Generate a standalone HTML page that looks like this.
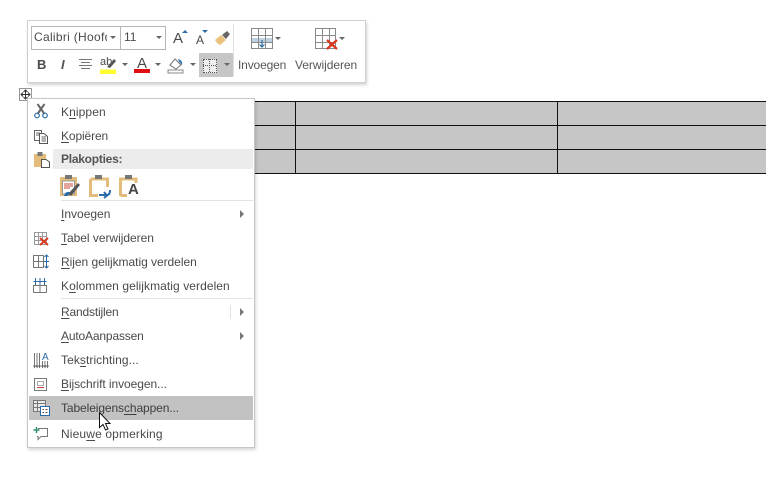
<!DOCTYPE html>
<html><head><meta charset="utf-8">
<style>
html,body{margin:0;padding:0;background:#fff;width:766px;height:482px;overflow:hidden}
body{position:relative;font-family:"Liberation Sans",sans-serif;color:#444}
.a{position:absolute}
.t{position:absolute;font-size:12px;line-height:16px;white-space:nowrap;color:#4a4a4a;letter-spacing:0}
svg{position:absolute;overflow:visible}
u{text-underline-offset:2px;text-decoration-thickness:1px}
.arr{position:absolute;width:0;height:0;border-left:4px solid #777;border-top:4px solid transparent;border-bottom:4px solid transparent}
.dn{position:absolute;width:0;height:0;border-top:3px solid #666;border-left:3px solid transparent;border-right:3px solid transparent}
</style></head><body>

<!-- table -->
<div class="a" style="left:250px;top:101px;width:516px;height:73px;background:#c6c6c6"></div>
<div class="a" style="left:250px;top:101px;width:516px;height:1px;background:#111"></div>
<div class="a" style="left:250px;top:125px;width:516px;height:1px;background:#111"></div>
<div class="a" style="left:250px;top:149px;width:516px;height:1px;background:#111"></div>
<div class="a" style="left:250px;top:173px;width:516px;height:1px;background:#111"></div>
<div class="a" style="left:295px;top:101px;width:1px;height:73px;background:#111"></div>
<div class="a" style="left:557px;top:101px;width:1px;height:73px;background:#111"></div>

<!-- mini toolbar -->
<div class="a" style="left:27px;top:20px;width:337px;height:61px;background:#fff;border:1px solid #d0d0d0;box-shadow:1px 2px 3px rgba(0,0,0,.18)"></div>
<div class="a" style="left:31px;top:26px;width:88px;height:22px;border:1px solid #b5b5b5"></div>
<div class="a" style="left:120px;top:26px;width:45px;height:22px;border:1px solid #b5b5b5;border-left:0"></div>
<div class="t" style="left:34px;top:29px;width:73px;overflow:hidden;letter-spacing:.3px">Calibri (Hoofdtekst)</div>
<div class="dn" style="left:110px;top:36px"></div>
<div class="t" style="left:124px;top:29px">11</div>
<div class="dn" style="left:156px;top:36px"></div>
<div class="t" style="left:173px;top:31px;font-size:15px">A</div>
<div class="a" style="left:182px;top:30px;border-bottom:3px solid #2b6ca8;border-left:3px solid transparent;border-right:3px solid transparent"></div>
<div class="t" style="left:196px;top:32px;font-size:12px">A</div>
<div class="a" style="left:202px;top:30px;border-top:3px solid #2b6ca8;border-left:3px solid transparent;border-right:3px solid transparent"></div>
<svg style="left:214px;top:30px" width="18" height="16"><path d="M1 10L7 5L12 10L6 15L3 13Z" fill="#eac27c"/><path d="M8 5L13 1L16 4L12 9Z" fill="#666"/></svg>
<div class="a" style="left:233px;top:24px;width:1px;height:52px;background:#e2e2e2"></div>

<div class="t" style="left:37px;top:57px;font-weight:bold;font-size:13px">B</div>
<div class="t" style="left:61px;top:57px;font-style:italic;font-size:13px;font-weight:bold;color:#555">I</div>
<svg style="left:78px;top:58px" width="15" height="13"><path d="M1 1.500H14M3 4.500H12M1 7.500H14M3 10.500H12" stroke="#777" stroke-width="1"/></svg>
<div class="t" style="left:100px;top:54px;font-size:11px">ab</div>
<svg style="left:100px;top:54px" width="17" height="20"><path d="M7 13L14 5L16 7L10 14Z" fill="#555"/><rect x="0" y="15.500" width="16" height="4.500" fill="#ffff2e"/></svg>
<div class="dn" style="left:122px;top:63px"></div>
<div class="t" style="left:137px;top:56px;font-size:15px">A</div>
<div class="a" style="left:134px;top:69px;width:16px;height:4px;background:#e00f14"></div>
<div class="dn" style="left:155px;top:63px"></div>
<svg style="left:167px;top:56px" width="18" height="18"><path d="M3 9L8 3L14 9L9 13Z" fill="#fff" stroke="#777"/><path d="M11 3Q16 4 15 9L12 6Z" fill="#3f7fb5"/><rect x="1" y="14" width="15" height="3" fill="#fff" stroke="#888"/></svg>
<div class="dn" style="left:190px;top:63px"></div>
<div class="a" style="left:199px;top:53px;width:34px;height:24px;background:#c6c6c6"></div>
<div class="a" style="left:203px;top:59px;width:12px;height:12px;background:#eee;border:1px dotted #555"></div>
<div class="a" style="left:209px;top:59px;width:0;height:13px;border-left:1px dotted #555"></div>
<div class="a" style="left:203px;top:65px;width:13px;height:0;border-top:1px dotted #555"></div>
<div class="dn" style="left:224px;top:63px"></div>

<svg style="left:251px;top:28px" width="22" height="21"><rect x="1" y="10" width="20" height="4" fill="#bdd0e4"/><path d="M.5.500H21.500V20.500H.5ZM7.500.500V20.500M14.500.500V20.500M.5 7.500H21.500M.5 14.500H21.500" fill="none" stroke="#8a8a8a"/><path d="M11 12V19M8.500 16.500L11 19L13.500 16.500" fill="none" stroke="#2b6ca8" stroke-width="1.200"/></svg>
<div class="dn" style="left:275px;top:37px"></div>
<div class="t" style="left:238px;top:57px;letter-spacing:-.15px;color:#555">Invoegen</div>
<svg style="left:315px;top:28px" width="24" height="22"><path d="M.5.500H20.500V20.500H.5ZM7.500.500V20.500M14.500.500V20.500M.5 7.500H20.500M.5 14.500H20.500" fill="none" stroke="#8a8a8a"/><path d="M12 12L22 21M22 12L12 21" stroke="#d8391e" stroke-width="2.200"/></svg>
<div class="dn" style="left:339px;top:37px"></div>
<div class="t" style="left:295px;top:57px;letter-spacing:-.05px;color:#555">Verwijderen</div>

<!-- move handle -->
<div class="a" style="left:19px;top:88px;width:11px;height:11px;border:1px solid #999;background:#fff"></div>
<svg style="left:20px;top:89px" width="11" height="11"><path d="M5.500 1V10M1 5.500H10M3.500 3L5.500 1L7.500 3M3.500 8L5.500 10L7.500 8M3 3.500L1 5.500L3 7.500M8 3.500L10 5.500L8 7.500" fill="none" stroke="#333"/></svg>

<!-- context menu -->
<div class="a" style="left:27px;top:98px;width:226px;height:348px;background:#fff;border:1px solid #c6c6c6;box-shadow:1px 2px 3px rgba(0,0,0,.16)"></div>
<div class="a" style="left:53px;top:149px;width:200px;height:20px;background:#ececec"></div>
<div class="t" style="left:61px;top:151px;font-weight:bold;letter-spacing:-.25px;color:#555">Plakopties:</div>

<div class="t" style="left:61px;top:104px;letter-spacing:.1px">K<u>n</u>ippen</div>
<svg style="left:34px;top:104px" width="15" height="15"><path d="M3.500 0L10.500 10M10.500 0L3.500 10" stroke="#666" stroke-width="2"/><circle cx="3" cy="11.500" r="2.300" fill="none" stroke="#2b6ca8" stroke-width="1.200"/><circle cx="11" cy="11.500" r="2.300" fill="none" stroke="#2b6ca8" stroke-width="1.200"/></svg>
<div class="t" style="left:61px;top:128px;letter-spacing:-.12px"><u>K</u>opiëren</div>
<svg style="left:34px;top:130px" width="15" height="14"><path d="M.5.500H7.500V10.500H.5Z" fill="#fff" stroke="#666"/><path d="M5.500 3.500H10L13.500 6.500V13.500H5.500Z" fill="#fff" stroke="#555"/><path d="M2 3H6M2 5H5M7.500 7H12M7.500 9H12M7.500 11H12" stroke="#666"/></svg>
<svg style="left:34px;top:151px" width="16" height="17"><rect x="0" y="3" width="12" height="13" fill="#e3bc7c"/><rect x="3.500" y="1" width="5" height="4" fill="#777"/><path d="M7.500 8.500H12L15.500 11V16.500H7.500Z" fill="#fff" stroke="#555"/></svg>

<!-- paste icons -->
<svg style="left:59px;top:174px" width="22" height="24"><path d="M1 3H18V22H1Z" fill="#e3bc7c"/><path d="M3.500 7H15.500V20H3.500Z" fill="#fff" stroke="#999"/><rect x="6" y="1" width="7" height="4" fill="#777"/><path d="M5 10H14M5 12H14M5 14H11" stroke="#c8493a"/><path d="M9 20L19 9L21 11L12 22Z" fill="#555"/><path d="M5 22Q6 17 11 18L9 22Z" fill="#2b6ca8"/></svg>
<svg style="left:89px;top:174px" width="23" height="24"><path d="M1.500 5H18.500V13M9 21.500H1.500V5" fill="none" stroke="#e3bc7c" stroke-width="3"/><rect x="6" y="1" width="7" height="4" fill="#777"/><path d="M10 21H18Q21 21 21 16M15 18L18 21.500L15 24" fill="none" stroke="#2b6ca8" stroke-width="2"/></svg>
<svg style="left:119px;top:174px" width="22" height="24"><path d="M1.500 22V5H17V9M1.500 21.500H8" fill="none" stroke="#e3bc7c" stroke-width="3"/><rect x="6" y="1" width="7" height="4" fill="#777"/></svg>
<div class="t" style="left:128px;top:182px;font-size:15px;font-weight:bold;color:#444">A</div>

<div class="a" style="left:61px;top:200px;width:192px;height:1px;background:#e2e2e2"></div>
<div class="t" style="left:61px;top:206px;letter-spacing:0"><u>I</u>nvoegen</div>
<div class="arr" style="left:240px;top:210px"></div>
<div class="t" style="left:61px;top:230px;letter-spacing:-.03px"><u>T</u>abel verwijderen</div>
<svg style="left:34px;top:232px" width="15" height="14"><path d="M.5.500H12.500V12.500H.5ZM4.500.500V12.500M8.500.500V12.500M.5 4.500H12.500M.5 8.500H12.500" fill="none" stroke="#999"/><path d="M6 6L14 13M14 6L6 13" stroke="#d8391e" stroke-width="2"/></svg>
<div class="t" style="left:61px;top:254px;letter-spacing:-.04px"><u>R</u>ijen gelijkmatig verdelen</div>
<svg style="left:33px;top:255px" width="17" height="14"><path d="M.5.500H10.500V12.500H.5ZM5.500.500V12.500M.5 6.500H10.500" fill="none" stroke="#777"/><path d="M13.500 0V13M11 6.500H16M11.500 2L13.500 0L15.500 2M11.500 11L13.500 13L15.500 11" fill="none" stroke="#2b6ca8"/></svg>
<div class="t" style="left:61px;top:278px;letter-spacing:.07px">K<u>o</u>lommen gelijkmatig verdelen</div>
<svg style="left:33px;top:278px" width="15" height="15"><path d="M.5 7.500H13.500V14.500H.5ZM7 7.500V14.500" fill="none" stroke="#777"/><path d="M.5 3.500H13.500M2.500 0V7M7 0V7M11.500 0V7" fill="none" stroke="#2b6ca8"/></svg>
<div class="a" style="left:61px;top:298px;width:192px;height:1px;background:#e2e2e2"></div>
<div class="t" style="left:61px;top:304px;letter-spacing:-.17px"><u>R</u>andstijlen</div>
<div class="a" style="left:230px;top:305px;width:1px;height:14px;background:#e2e2e2"></div>
<div class="arr" style="left:240px;top:308px"></div>
<div class="t" style="left:61px;top:328px;letter-spacing:-.16px"><u>A</u>utoAanpassen</div>
<div class="arr" style="left:240px;top:332px"></div>
<div class="t" style="left:61px;top:352px;letter-spacing:.07px">Tek<u>s</u>trichting...</div>
<svg style="left:33px;top:353px" width="16" height="16"><path d="M1.500 0V14M4 0V14M6.500 0V14M9.500 8V14M12 8V14M14.500 8V14" stroke="#666" stroke-width=".9"/><path d="M.5 12.500L1.500 14.500L2.500 12.500M3 12.500L4 14.500L5 12.500M5.500 12.500L6.500 14.500L7.500 12.500M8.500 12.500L9.500 14.500L10.500 12.500M11 12.500L12 14.500L13 12.500M13.500 12.500L14.500 14.500L15.500 12.500" fill="none" stroke="#555" stroke-width=".8"/></svg>
<div class="t" style="left:42px;top:350px;font-size:10px;color:#2b6ca8">A</div>
<div class="t" style="left:61px;top:376px;letter-spacing:-.07px"><u>B</u>ijschrift invoegen...</div>
<svg style="left:34px;top:378px" width="14" height="14"><rect x=".5" y=".5" width="12" height="12" fill="#fff" stroke="#777"/><rect x="3.500" y="3.500" width="6" height="4" fill="#fff" stroke="#aaa"/><path d="M3 9.500H10" stroke="#c8493a"/></svg>
<div class="a" style="left:29px;top:396px;width:224px;height:24px;background:#c2c2c2"></div>
<div class="t" style="left:61px;top:400px;letter-spacing:-.1px;color:#3d3d3d">Tabeleigens<u>c</u><u>h</u>appen...</div>
<svg style="left:33px;top:400px" width="17" height="16"><path d="M.5.500H12.500V11.500H.5ZM.5 3.500H12.500M4.500.500V11.500M.5 7.500H12.500" fill="#e8e8e8" stroke="#777"/><rect x="7.500" y="6.500" width="9" height="9" fill="#fff" stroke="#2b6ca8"/><path d="M9.500 9.500H11M12.500 9.500H14.500M9.500 12.500H11M12.500 12.500H14.500" stroke="#555"/></svg>
<div class="t" style="left:61px;top:426px;letter-spacing:.14px">Nieu<u>w</u>e opmerking</div>
<svg style="left:33px;top:426px" width="16" height="16"><path d="M5 2.500H14.500V10.500H8L5 13.500V10.500H4" fill="none" stroke="#777"/><path d="M3.500 1V7M.5 4H6.500" stroke="#2f8f6e" stroke-width="1.500"/></svg>

<!-- cursor -->
<svg style="left:99px;top:412px" width="13" height="19"><path d="M.5.500V15.500L4 12.500L6.500 18L9 17L6.500 11.500H11Z" fill="#fff" stroke="#111"/></svg>
</body></html>
